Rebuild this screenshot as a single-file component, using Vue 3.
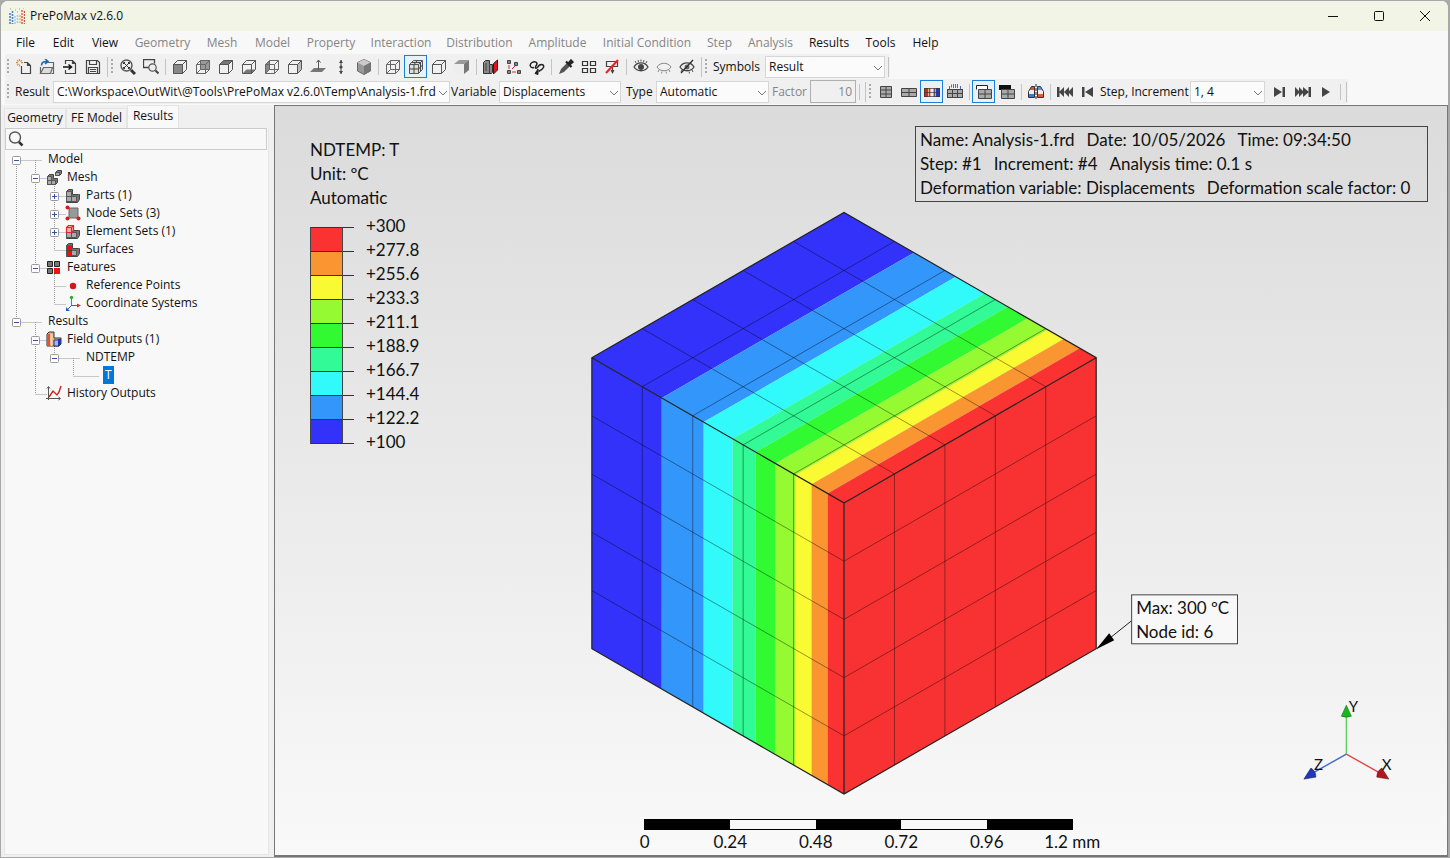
<script setup>
import { ref } from 'vue'

const menus = [
  ['File', true], ['Edit', true], ['View', true], ['Geometry', false], ['Mesh', false],
  ['Model', false], ['Property', false], ['Interaction', false], ['Distribution', false],
  ['Amplitude', false], ['Initial Condition', false], ['Step', false], ['Analysis', false],
  ['Results', true], ['Tools', true], ['Help', true],
]

const wire = '<path d="M1.5 5.5h9v9h-9zM5.5 1.5h9v9h-9zM1.5 5.5l4-4M10.5 5.5l4-4M1.5 14.5l4-4M10.5 14.5l4-4" fill="none" stroke="#666"/>'
const box = '<path d="M1.5 5.5h9v9h-9zM1.5 5.5l4-4h9v9l-4 4M10.5 5.5l4-4" fill="none" stroke="#555"/>'
const grid = '<rect x="0.5" y="5.5" width="15" height="8" fill="#aaa" stroke="#444"/><path d="M5.5 5.5v8M10.5 5.5v8M0.5 9.5h15" stroke="#444" fill="none"/>'
const eye = '<path d="M1 8c3-5.500 11-5.500 14 0c-3 5-11 5-14 0z" fill="none" stroke="#444" stroke-width="1.300"/>'
const lump = '<path d="M1.500 4.500l2-2h4v5h6l1 0v5l-2 3h-11z" fill="#777" stroke="#444"/><path d="M1.500 4.500h5v5h-5zM1.500 9.500h5v5h-5zM6.500 9.500h5v5h-5z" fill="#aaa" stroke="#555"/>'

const icons = {
  new: '<path d="M5.500 7v7.500h9v-8l-3-3h-3.500M11.500 3.500v3h3" fill="none" stroke="#444" stroke-width="1.200"/><path d="M3.500 0v2M3.500 5.500v2M0 3.700h2M5 3.700h2M1 1.200l1.500 1.500M6 1.200l-1.500 1.500M1 6.300l1.500-1.500" stroke="#e0902c" stroke-width="1.200"/>',
  open: '<path d="M7.500 3.500h7v11h-2M1.500 8v6.500" fill="none" stroke="#666" stroke-width="1.200"/><path d="M4.500 8.500h9l-2 6h-10z" fill="#ddd" stroke="#666" stroke-width="1.200"/><path d="M2.500 6.500c0-4 3-4 6-4M6 0l3 2.500l-3 2.500" fill="none" stroke="#1668b4" stroke-width="1.600"/>',
  import: '<path d="M3.500 5v-3.500h7l3 3v10h-10v-3.500M10.500 1.500v3h3" fill="none" stroke="#444" stroke-width="1.200"/><path d="M1 8h8M6.500 5.500l3 2.500l-3 2.500" fill="none" stroke="#111" stroke-width="1.500"/>',
  save: '<path d="M1.500 1.500h11l2 2v11h-13zM4.500 1.500v4h7v-4M3.500 14.500v-6h9v6M5 10.500h6M5 12.500h6" fill="none" stroke="#444" stroke-width="1.200"/>',
  fit: '<circle cx="6.500" cy="6.500" r="5.500" fill="#eee" stroke="#555" stroke-width="1.400"/><path d="M11 11l4 4" stroke="#333" stroke-width="3"/><path d="M4 4l5 5M9 4l-5 5M3.500 5v-1.500h1.500M8 3.500h1.500v1.500M3.500 8v1.500h1.500M9.500 8v1.500h-1.500" stroke="#333" fill="none"/>',
  zoombox: '<path d="M6 8.500h-5.500v-8h11v4" fill="none" stroke="#444" stroke-width="1.300"/><circle cx="9.500" cy="8.500" r="3.700" fill="#eee" stroke="#555" stroke-width="1.200"/><path d="M12.500 11.500l3 3" stroke="#444" stroke-width="2"/>',
  front: '<path d="M1 5h10v10h-10z" fill="#888"/>' + box,
  back: '<path d="M5 1h10v10h-10z" fill="#999"/>' + wire,
  top: '<path d="M1.500 5.500l4-4h9l-4 4z" fill="#777"/>' + box,
  bottom: '<path d="M1.500 14.500l4-4h9l-4 4z" fill="#777"/>' + box,
  left: '<path d="M1.500 5.500l4-4v9l-4 4z" fill="#888"/>' + wire,
  right: '<path d="M10.500 5.500l4-4v9l-4 4z" fill="#bbb"/>' + box,
  normal: '<path d="M0 13l4-4h12l-4 4z" fill="#777"/><path d="M8.500 11v-10M6.500 3.500l2-2.500l2 2.500" stroke="#555" fill="none"/>',
  vertical: '<path d="M8 1v14" stroke="#444"/><path d="M6 4l2-3l2 3zM6 12l2 3l2-3z" fill="#444"/><circle cx="8" cy="8" r="1.600" fill="#444"/>',
  iso: '<path d="M8 0.500l6.500 3v8.500l-6.500 3.500l-6.500-3.500v-8.500z" fill="#999" stroke="#666"/><path d="M1.500 3.500l6.500 3.500l6.500-3.500l-6.500-3z" fill="#ccc"/><path d="M8 7v8.500l6.500-3.500v-8.500z" fill="#777"/>',
  wire,
  edges: '<path d="M1.500 5.500l4-4h9v9l-4 4h-9z" fill="#ddd"/>' + box + '<path d="M3.500 3.500h9v9M9.500 1.500l-3.500 4v9M1.500 10h9l4-4" stroke="#444" fill="none"/>',
  outline: box,
  shaded: '<path d="M0 5h10v10h-10z" fill="#eee"/><path d="M0 5l5-4h10l-5 4z" fill="#999"/><path d="M10 5l5-4v10l-5 4z" fill="#777"/>',
  section: '<path d="M0.500 3.500l2-2h4v4h3v8l-1 1h-8z" fill="#888" stroke="#333"/><path d="M3 4v8M6.500 6v8" stroke="#444"/><path d="M10.500 4.500l4-3.500v10l-4 4z" fill="#e8121c" stroke="#222"/>',
  explode: '<path d="M1.500 1.500h3v3h-3zM8.500 3.500h3v3h-3zM1.500 11.500h3v3h-3zM11.500 11.500h3v3h-3z" fill="#888" stroke="#444"/><path d="M3 6v4M6 10l3-3M6 13h4" stroke="#c03030" fill="none"/>',
  follow: '<path d="M5 8.500c-4 1-5-3-2-5c3-2 6 0 4.500 2.500c-2 3-1 4 1 2.500c2-4 7-4 6 0c-1 2-3 3-5 4" fill="none" stroke="#222" stroke-width="1.500"/><path d="M9 10v5.500l-3-1z" fill="#222" stroke="#222"/>',
  dropper: '<path d="M1 15l2-5l6-6l3 3l-6 6z" fill="#555"/><path d="M8 2.500l5.500 5.500M10 5l3-3.500l1.500 1.500l-3.500 3" stroke="#222" stroke-width="2.200"/>',
  squares: '<path d="M1.500 2.500h5v4h-5zM9.500 2.500h5v4h-5zM1.500 9.500h5v4h-5zM9.500 9.500h5v4h-5z" fill="none" stroke="#333" stroke-width="1.200"/>',
  nolabel: '<path d="M2.500 2.500h11v5h-11zM8.500 7.500v6" fill="none" stroke="#444" stroke-width="1.200"/><path d="M6.500 11h4l-2 4z" fill="#444"/><path d="M2 14l12-13" stroke="#ee2020" stroke-width="2"/>',
  show: eye + '<circle cx="8" cy="8" r="3" fill="#444"/><path d="M3 4l-1-2M5.500 3l-.5-2M8 2.500v-2M10.500 3l.5-2M13 4l1-2" stroke="#555"/>',
  hide: '<path d="M1 8c3-5 11-5 14 0c-3 5-11 5-14 0M3 11l-1 2M6 12.500l-.5 2M10 12.500l.5 2M13 11l1 2" fill="none" stroke="#888"/>',
  toggle: eye + '<circle cx="8" cy="8" r="2.500" fill="#666"/><path d="M2 14l12-13" stroke="#333" stroke-width="1.400"/><path d="M3 11l-1 2M10 12.500l.5 2M13 11l1 2" stroke="#555"/>',
  grid1: '<path d="M2.500 2.500h11v11h-11zM2.500 6h11M2.500 10h11M8 2.500v11" fill="#aaa" stroke="#444"/>',
  grid2: '<path d="M0.500 4.500h15v8h-15zM8 4.500v8M0.500 8.500h15" fill="#aaa" stroke="#444"/>',
  contour: '<path d="M0 4h5v9h-5z" fill="#c62f1e"/><path d="M4 4h3v9h-3z" fill="#f5a88c"/><path d="M7 4h2v9h-2z" fill="#f4ece0"/><path d="M9 4h3v9h-3z" fill="#8fb4ea"/><path d="M12 4h4v9h-4z" fill="#2339c4"/><path d="M0.500 4.500h15v8h-15zM5.500 4.500v8M10.500 4.500v8M0.500 8.500h15" fill="none" stroke="#333" stroke-width="0.700"/>',
  vectors: grid + '<path d="M2.500 2v3M13.500 2v3M4.500 0.500v3" stroke="#456ac8"/><path d="M6.500 0v4M8.500 0v4M10.500 0v4" stroke="#e43b32"/>',
  undeformed: '<path d="M0.500 5.500v-4h11v4" fill="#fff" stroke="#222"/><path d="M2.500 5.500h13v9h-13zM2.500 10h13M9 5.500v9" fill="#aaa" stroke="#444"/>',
  deformed: '<path d="M0 1h12v5h-12z" fill="#111"/><path d="M2.500 5.500h13v9h-13zM2.500 10h13M9 5.500v9" fill="#aaa" stroke="#444"/>',
  symmetry: '<path d="M6.500 2.500v11h-6v-6l3-5z" fill="#f4ece0"/><path d="M3 3h3v3h-4.500z" fill="#e2502f"/><path d="M1 10h5v3h-5z" fill="#3f74e0"/><path d="M9.500 2.500v11h6v-6l-3-5z" fill="#f4ece0"/><path d="M10 3h3l1.500 3h-4.500z" fill="#5a94e4"/><path d="M10 10h5v3h-5z" fill="#e3573c"/><path d="M6.500 2.500v11h-6v-6l3-5zM9.500 2.500v11h6v-6l-3-5z" fill="none" stroke="#333"/><path d="M8 0v16" stroke="#222" stroke-dasharray="3 1"/>',
  first: '<path d="M0 3h2.500v10h-2.500zM7 3v10l-5-5zM12 3v10l-5-5zM16 3v10l-5-5z" fill="#444"/>',
  prev: '<path d="M2 3h2.500v10h-2.500zM13 3v10l-8-5z" fill="#444"/>',
  next: '<path d="M2 3v10l8-5zM10.500 3h2.500v10h-2.500z" fill="#444"/>',
  last: '<path d="M0 3v10l5-5zM4 3v10l5-5zM8 3v10l6-5zM13.500 3h2.500v10h-2.500z" fill="#444"/>',
  play: '<path d="M4 3v10l8-5z" fill="#444"/>',
  mesh: '<path d="M1.500 7.500l2-2h4v4h4l0 4l-2 2h-8z" fill="#777" stroke="#444"/><path d="M1.500 7.500h4v4h-4zM1.500 11.500h4v4h-4zM5.500 11.500h4v4h-4z" fill="#aaa" stroke="#555"/><path d="M9.500 3.500l2-2h4v3l-2 2h-4z" fill="#777" stroke="#444"/><path d="M9.500 3.500h4v3h-4z" fill="#aaa" stroke="#555"/>',
  parts: lump,
  nodes: '<path d="M4 3h9v10h-9z" fill="#999" stroke="#666"/><circle cx="2.500" cy="2.500" r="2" fill="#e8141c"/><circle cx="2.500" cy="13.500" r="2" fill="#e8141c"/><circle cx="13.500" cy="13.500" r="2" fill="#e8141c"/>',
  elements: lump + '<path d="M1.500 4.500l2-2h5v5l-2 2h-5zM1.500 4.500h5v5M6.500 4.500l2-2" fill="#f6b0b0" stroke="#ee2222" stroke-width="1.200"/>',
  surfaces: lump + '<path d="M2 5h5v10h-5z" fill="#f00c10"/><path d="M2 9.500h5" stroke="#444"/>',
  features: '<path d="M1.500 2.500h5v5h-5zM8.500 2.500h5v5h-5zM1.500 9.500h5v5h-5z" fill="#777" stroke="#222"/><path d="M8 9h6v6h-6z" fill="#ee1212"/>',
  point: '<circle cx="8" cy="9" r="3.200" fill="#d01818"/>',
  axes: '<path d="M6.500 3v8" stroke="#3aa040"/><path d="M6.500 10.500h8" stroke="#d03030"/><path d="M6.500 10.500l-5 5" stroke="#3060b0"/><circle cx="6.500" cy="2.500" r="1.700" fill="#25b030"/><path d="M12 8.500l4 2l-4 2z" fill="#d03030"/><path d="M1 12v4h4z" fill="#3060b0"/>',
  field: '<path d="M1 3l2-2h5v6h7v6l-2 2h-12z" fill="#dcb08c" stroke="#333"/><path d="M1 3h3v12h-3z" fill="#e4532f"/><path d="M4.500 3h2v12h-2z" fill="#f3d3a8"/><path d="M8 9h5v6h-5z" fill="#9fb8e8" stroke="#335"/><path d="M12 8h3v5l-2 2h-1z" fill="#2434b8"/>',
  history: '<path d="M2.500 15v-13M1 3.500l1.500-2l1.500 2M0 13.500h14M12.500 12l2 1.500l-2 1.500" fill="none" stroke="#555"/><path d="M3 12l4-6l4 4l2-3l2-6" fill="none" stroke="#cc2222" stroke-width="1.400"/>',
}

const viewTools = [
  'grip', 'new', 'open', 'import', 'save', 'break', 'fit', 'zoombox', 'sep',
  'front', 'back', 'top', 'bottom', 'left', 'right', 'normal', 'vertical', 'iso', 'sep',
  'wire', 'edges', 'outline', 'shaded', 'sep', 'section', 'explode', 'follow', 'sep',
  'dropper', 'squares', 'nolabel', 'sep', 'show', 'hide', 'toggle',
]
const resultTools = ['grid1', 'grid2', 'contour', 'vectors', 'sep', 'undeformed', 'deformed', 'sep', 'symmetry', 'sep', 'first', 'prev']
const playTools = ['next', 'last', 'play']
const active = new Set(['edges', 'contour', 'undeformed'])

const nodes = [
  { label: 'Model', level: 0, state: '-' },
  { label: 'Mesh', level: 1, state: '-', icon: 'mesh' },
  { label: 'Parts (1)', level: 2, state: '+', icon: 'parts' },
  { label: 'Node Sets (3)', level: 2, state: '+', icon: 'nodes' },
  { label: 'Element Sets (1)', level: 2, state: '+', icon: 'elements' },
  { label: 'Surfaces', level: 2, icon: 'surfaces' },
  { label: 'Features', level: 1, state: '-', icon: 'features' },
  { label: 'Reference Points', level: 2, icon: 'point' },
  { label: 'Coordinate Systems', level: 2, icon: 'axes' },
  { label: 'Results', level: 0, state: '-' },
  { label: 'Field Outputs (1)', level: 1, state: '-', icon: 'field' },
  { label: 'NDTEMP', level: 2, state: '-' },
  { label: 'T', level: 3, selected: true },
  { label: 'History Outputs', level: 1, icon: 'history' },
]
const continues = (index, level) => {
  for (const next of nodes.slice(index + 1)) {
    if (next.level < level) return false
    if (next.level === level) return true
  }
  return false
}
const col = (level) => level * 19 + 9.5
const guides = (node, index) => {
  const parts = []
  for (let l = 0; l < node.level; l++) if (continues(index, l)) parts.push(`M${col(l)} 0V18`)
  const x = col(node.level)
  if (index > 0) parts.push(`M${x} 0V10`)
  if (continues(index, node.level)) parts.push(`M${x} 10V18`)
  parts.push(`M${x} 10.500H${node.icon ? x + 11 : x + 26}`)
  if (node.state === '-') parts.push(`M${x + 19} 10V18`)
  return parts.join('')
}

const bands = ['#fa3232', '#fa9632', '#fafa32', '#96fa32', '#32fa32', '#32fa96', '#32fafa', '#3296fa', '#3232fa']
const levels = ['+300', '+277.8', '+255.6', '+233.3', '+211.1', '+188.9', '+166.7', '+144.4', '+122.2', '+100']

// Isometric cube: L is the upper left corner, W/D the run of a horizontal edge, H the height.
const L = { x: 591, y: 357 }
const W = 252.5
const D = 145.5
const H = 291.5
const cuts = [0, 70, 112, 141, 164, 184, 204, 220, 236, W]
const edgeY = (x) => L.y + (x / W) * D
const stripes = cuts.slice(0, -1).map((a, i) => {
  const b = cuts[i + 1]
  return {
    fill: bands[8 - i],
    side: `${L.x + a},${edgeY(a)} ${L.x + b},${edgeY(b)} ${L.x + b},${edgeY(b) + H} ${L.x + a},${edgeY(a) + H}`,
    top: `${L.x + a},${edgeY(a)} ${L.x + b},${edgeY(b)} ${L.x + b + W},${edgeY(b) - D} ${L.x + a + W},${edgeY(a) - D}`,
  }
})
const fx = L.x + W
const fy = L.y + D
const meshLines = [1, 2, 3, 4].map((i) => {
  const u = (W / 5) * i
  const v = (D / 5) * i
  const h = (H / 5) * i
  return [
    `M${L.x + u} ${L.y + v}v${H}`,
    `M${L.x} ${L.y + h}l${W} ${D}`,
    `M${fx + u} ${fy - v}v${H}`,
    `M${fx} ${fy + h}l${W} ${-D}`,
    `M${L.x + u} ${L.y + v}l${W} ${-D}`,
    `M${L.x + u} ${L.y - v}l${W} ${D}`,
  ].join('')
}).join('')

const scaleLabels = ['0', '0.24', '0.48', '0.72', '0.96', '1.2 mm']
const factor = ref('10')
const search = ref('')
</script>

<template>
  <div class="window">
    <header class="titlebar">
      <svg class="logo" viewBox="0 0 16 16" aria-hidden="true">
        <path d="M1 5v11M3.500 3v13" stroke="#4b7fd0" stroke-width="1.600" stroke-dasharray="2 1" />
        <path d="M6 8v8M8.500 7v9" stroke="#a9c6ec" stroke-width="1.600" stroke-dasharray="2 1" />
        <path d="M11 7v9" stroke="#f0b090" stroke-width="1.600" stroke-dasharray="2 1" />
        <path d="M13 2v14M15.500 3v13" stroke="#d9523c" stroke-width="1.400" stroke-dasharray="2 1" />
        <path d="M1 1h1M6 2h1M10 1h1M8 4h1M14 0h1" stroke="#7ba3d8" />
      </svg>
      <h1>PrePoMax v2.6.0</h1>
      <div class="caption">
        <button aria-label="Minimize"><svg viewBox="0 0 12 12"><path d="M1 6.500h10" /></svg></button>
        <button aria-label="Maximize"><svg viewBox="0 0 12 12"><rect x="1.500" y="1.500" width="9" height="9" rx="1" /></svg></button>
        <button aria-label="Close"><svg viewBox="0 0 12 12"><path d="M1 1l10 10M11 1L1 11" /></svg></button>
      </div>
    </header>

    <nav class="menubar">
      <button v-for="[name, enabled] in menus" :key="name" :disabled="!enabled">{{ name }}</button>
    </nav>

    <div class="toolrow">
      <div class="strip">
        <template v-for="(tool, i) in viewTools" :key="i">
          <i v-if="tool === 'grip'" class="grip"></i>
          <i v-else-if="tool === 'sep'" class="sep"></i>
          <template v-else-if="tool === 'break'"><i class="end"></i><i class="grip"></i></template>
          <button v-else class="tool" :class="{ active: active.has(tool) }" :aria-label="tool">
            <svg viewBox="0 0 16 16" v-html="icons[tool]"></svg>
          </button>
        </template>
        <i class="end"></i>
        <i class="grip"></i>
        <label for="symbols" class="symbols">Symbols</label>
        <div class="select w-symbols">
          <select id="symbols"><option>Result</option></select>
          <svg viewBox="0 0 10 6"><path d="M1 1l4 4l4-4" /></svg>
        </div>
        <i class="end"></i>
      </div>
    </div>

    <div class="toolrow">
      <div class="strip">
        <i class="grip"></i>
        <label for="result" class="l-result">Result</label>
        <div class="select w-result">
          <select id="result"><option>C:\Workspace\OutWit\@Tools\PrePoMax v2.6.0\Temp\Analysis-1.frd</option></select>
          <svg viewBox="0 0 10 6"><path d="M1 1l4 4l4-4" /></svg>
        </div>
        <label for="variable" class="l-variable">Variable</label>
        <div class="select w-variable">
          <select id="variable"><option>Displacements</option></select>
          <svg viewBox="0 0 10 6"><path d="M1 1l4 4l4-4" /></svg>
        </div>
        <label for="type" class="l-type">Type</label>
        <div class="select w-type">
          <select id="type"><option>Automatic</option></select>
          <svg viewBox="0 0 10 6"><path d="M1 1l4 4l4-4" /></svg>
        </div>
        <label for="factor" class="l-factor">Factor</label>
        <input id="factor" v-model="factor" class="factor" disabled />
        <i class="sep"></i>
        <i class="end"></i>
        <i class="grip"></i>
        <template v-for="(tool, i) in resultTools" :key="i">
          <i v-if="tool === 'sep'" class="sep"></i>
          <button v-else class="tool" :class="{ active: active.has(tool) }" :aria-label="tool">
            <svg viewBox="0 0 16 16" v-html="icons[tool]"></svg>
          </button>
        </template>
        <label for="increment" class="l-increment">Step, Increment</label>
        <div class="select w-increment">
          <select id="increment"><option>1, 4</option></select>
          <svg viewBox="0 0 10 6"><path d="M1 1l4 4l4-4" /></svg>
        </div>
        <i class="gap"></i>
        <button v-for="tool in playTools" :key="tool" class="tool" :aria-label="tool">
          <svg viewBox="0 0 16 16" v-html="icons[tool]"></svg>
        </button>
        <i class="sep"></i>
        <i class="end"></i>
      </div>
    </div>

    <main class="body">
      <aside class="side">
        <div class="tabs" role="tablist">
          <button role="tab" class="tab t1">Geometry</button>
          <button role="tab" class="tab t2">FE Model</button>
          <button role="tab" class="tab t3 current" aria-selected="true">Results</button>
        </div>
        <div class="panel">
          <div class="search">
            <svg viewBox="0 0 16 16"><circle cx="7" cy="6.500" r="5.500" fill="none" stroke="#555" stroke-width="1.400" /><path d="M11 11l3.500 3.500" stroke="#333" stroke-width="2.500" /></svg>
            <input v-model="search" aria-label="Search tree" />
          </div>
          <ul class="tree">
            <li v-for="(node, i) in nodes" :key="i">
              <svg class="guide" :width="node.level * 19 + 39" height="18">
                <path :d="guides(node, i)" class="dots" />
                <g v-if="node.state" :transform="`translate(${node.level * 19 + 5} 6)`">
                  <rect x="0.500" y="0.500" width="8" height="8" rx="1" class="expander" />
                  <path :d="node.state === '+' ? 'M2 4.500h5M4.500 2v5' : 'M2 4.500h5'" stroke="#3353a5" />
                </g>
                <svg v-if="node.icon" :x="node.level * 19 + 20" y="1" width="16" height="16" viewBox="0 0 16 16" v-html="icons[node.icon]"></svg>
              </svg>
              <span :class="{ selected: node.selected }">{{ node.label }}</span>
            </li>
          </ul>
        </div>
      </aside>

      <section class="viewport">
        <svg class="scene" viewBox="274 105 1173 750">
          <polygon v-for="s in stripes" :key="s.side" :points="s.side" :fill="s.fill" />
          <polygon v-for="s in stripes" :key="s.top" :points="s.top" :fill="s.fill" />
          <polygon :points="`${fx},${fy} ${fx + W},${fy - D} ${fx + W},${fy - D + H} ${fx},${fy + H}`" fill="#f83232" />
          <path :d="meshLines" fill="none" stroke="#000" stroke-opacity="0.450" stroke-width="0.900" />
          <path
            :d="`M${L.x} ${L.y}l${W} ${-D}l${W} ${D}v${H}l${-W} ${D}l${-W} ${-D}zl${W} ${D}v${H}m0 ${-H}l${W} ${-D}`"
            fill="none" stroke="#222" stroke-width="1.200"
          />
          <path d="M1132 620L1097 648" stroke="#222" />
          <path d="M1096 649l18-9l-5-7z" fill="#000" />
          <rect x="1131.500" y="594.500" width="106" height="49" fill="#f8f8f8" stroke="#444" />
          <text x="1136" y="614">Max: 300 ºC</text>
          <text x="1136" y="638">Node id: 6</text>

          <path d="M1346.500 754v-38" stroke="#5fd060" stroke-width="1.400" />
          <path d="M1346.500 754l32 18" stroke="#e04848" stroke-width="1.400" />
          <path d="M1346.500 754l-32 18" stroke="#4068d0" stroke-width="1.400" />
          <path d="M1346.500 705l5 11q-5 2-10 0z" fill="#17b81f" stroke="#176c1a" stroke-width="0.600" />
          <path d="M1389 779l-12-2q0-6 5-9z" fill="#b01820" stroke="#601015" stroke-width="0.600" />
          <path d="M1304 779l12-2q0-6-5-9z" fill="#2038b8" stroke="#101c60" stroke-width="0.600" />
          <g class="axis">
            <text x="1349" y="712">Y</text>
            <text x="1382" y="770">X</text>
            <text x="1314" y="770">Z</text>
          </g>
        </svg>

        <div class="legend">
          <p>NDTEMP: T</p>
          <p>Unit: ºC</p>
          <p>Automatic</p>
          <div class="scale">
            <svg width="48" height="218" viewBox="0 0 48 218">
              <rect v-for="(c, i) in bands" :key="c" x="0.500" :y="i * 24 + 1.500" width="32" height="24" :fill="c" />
              <path v-for="(l, i) in levels" :key="l" :d="`M0 ${i * 24 + 1.500}h44`" stroke="#333" />
              <path d="M0.500 1v217M32.500 1v217" stroke="#444" />
            </svg>
            <ol><li v-for="l in levels" :key="l">{{ l }}</li></ol>
          </div>
        </div>

        <div class="info">
          <p><span>Name: Analysis-1.frd</span><span>Date: 10/05/2026</span><span>Time: 09:34:50</span></p>
          <p><span>Step: #1</span><span>Increment: #4</span><span>Analysis time: 0.1 s</span></p>
          <p><span>Deformation variable: Displacements</span><span>Deformation scale factor: 0</span></p>
        </div>

        <div class="ruler">
          <div class="bar"><i v-for="n in 5" :key="n"></i></div>
          <div class="marks"><span v-for="s in scaleLabels" :key="s">{{ s }}</span></div>
        </div>
      </section>
    </main>
  </div>
</template>

<style>
body { background: linear-gradient(90deg, #aaa 168px, #c83238 168px, #c83238 238px, #aaa 238px, #aaa 1022px, #7886a8 1022px, #7886a8 1099px, #aaa 1099px); }
</style>

<style scoped>
* { box-sizing: border-box; margin: 0; padding: 0; }
.window {
  height: 100vh; display: flex; flex-direction: column; overflow: hidden;
  border: 1px solid #a8a8a8; border-right-width: 2px; border-radius: 8px 8px 0 0;
  background: #f8f8f8; color: #111;
  font: 12px/16px "Open Sans", "Noto Sans", sans-serif;
}
button, select, input { font: inherit; color: inherit; border: 0; background: none; border-radius: 0; }
.titlebar { height: 30px; flex: none; display: flex; align-items: center; background: #f2f4e6; padding-left: 8px; }
.logo { width: 16px; height: 16px; }
h1 { font-size: 12px; font-weight: 400; margin-left: 5px; flex: 1; }
.caption { display: flex; }
.caption button { width: 46px; height: 29px; display: grid; place-items: center; }
.caption svg { width: 12px; height: 12px; fill: none; stroke: #111; }
.menubar {
  height: 23px; flex: none; display: grid; align-items: center; padding-left: 6px;
  grid-template-columns: 37px 39px 44px 71px 48px 53px 64px 76px 81px 75px 104px 41px 61px 56px 47px 43px;
}
.menubar button { white-space: nowrap; }
.menubar button:disabled { color: #858585; }
.toolrow { height: 25px; flex: none; display: flex; padding-left: 4px; }
.strip { display: flex; align-items: center; background: #f0f0f0; border-radius: 3px; height: 25px; }
.grip { width: 7px; height: 17px; flex: none; background: radial-gradient(circle at 3px 2px, #aaa 1px, transparent 1px) 0 0 / 7px 4px; }
.sep { width: 6px; height: 16px; flex: none; border-left: 1px solid #c4c4c4; margin-left: 3px; margin-right: -3px; }
.end { width: 2px; height: 20px; flex: none; border-left: 1px solid #c4c4c4; margin-left: 3px; }
.gap { width: 3px; }
.tool { width: 23px; height: 23px; flex: none; display: grid; place-items: center; border: 1px solid transparent; }
.tool svg { width: 16px; height: 16px; }
.tool.active { border-color: #1a80d8; background: #e9f1f8; }
.strip label { white-space: nowrap; flex: none; }
.symbols { width: 55px; padding-left: 3px; }
.l-result { width: 41px; padding-left: 3px; }
.l-variable { width: 49px; padding-left: 1px; }
.l-type { width: 35px; padding-left: 5px; }
.l-factor { width: 41px; padding-left: 3px; color: #858585; }
.l-increment { width: 91px; padding-left: 1px; }
.select { position: relative; flex: none; height: 22px; }
.select select { appearance: none; width: 100%; height: 22px; padding: 0 9px 0 3px; background: #fbfbfb; border: 1px solid #d6d6d6; }
.select svg { position: absolute; right: 2px; top: 9px; width: 10px; height: 6px; fill: none; stroke: #777; pointer-events: none; }
.w-symbols { width: 120px; }
.w-result { width: 397px; }
.w-variable { width: 122px; }
.w-type { width: 113px; }
.w-increment { width: 75px; }
.factor { width: 46px; height: 23px; border: 1px solid #b0b0b0; text-align: right; padding-right: 3px; color: #858585; background: #f0f0f0; }
.body { flex: 1; min-height: 0; display: flex; padding-top: 1px; }
.side { width: 273px; flex: none; display: flex; flex-direction: column; background: #f0f0f0; padding: 0 5px 2px 3px; }
.tabs { display: flex; align-items: flex-end; height: 23px; flex: none; }
.tab { height: 20px; padding-bottom: 2px; background: #f2f2f2; border: 1px solid #e4e4e4; border-bottom: 0; text-align: center; white-space: nowrap; }
.tab.current { height: 23px; background: #f9f9f9; }
.t1 { width: 62px; }
.t2 { width: 61px; }
.t3 { width: 52px; }
.panel { flex: 1; background: #f8f8f8; border: 1px solid #e6e6e6; border-top: 0; }
.search { height: 22px; display: flex; align-items: center; border: 1px solid #ccc; margin-right: 1px; padding-left: 2px; }
.search svg { width: 16px; height: 16px; }
.search input { flex: 1; min-width: 0; outline: none; }
.tree { list-style: none; padding-left: 2px; }
.tree li { height: 18px; display: flex; align-items: center; white-space: nowrap; }
.guide { flex: none; }
.dots { fill: none; stroke: #999; stroke-dasharray: 1 1; }
.expander { fill: #fff; stroke: #999; }
.tree span { padding: 0 2px; line-height: 18px; }
.tree .selected { background: #0078d7; color: #fff; }
.viewport {
  flex: 1; min-width: 0; position: relative; border: 1px solid #777; border-bottom-width: 2px;
  background: linear-gradient(#dbdbdb, #f9f9f9);
  font: 17px/24px Lato, sans-serif; color: #111;
}
.scene { display: block; width: 100%; height: 100%; }
.scene text { font-size: 17px; fill: #111; }
.scene .axis text { font-size: 15px; }
.legend { position: absolute; left: 35px; top: 32px; }
.scale { display: flex; margin-top: 16px; }
.scale ol { list-style: none; margin: -12px 0 0 8px; }
.info { position: absolute; right: 19px; top: 20px; border: 1px solid #444; padding: 1px 4px; width: 513px; }
.info p { display: flex; gap: 12px; white-space: nowrap; }
.ruler { position: absolute; left: 369px; bottom: 1px; width: 429px; }
.bar { display: flex; height: 11px; border: 1px solid #000; }
.bar i { flex: 1; background: #f8f8f8; }
.bar i:nth-child(odd) { background: #000; }
.marks { display: flex; justify-content: space-between; margin: 0 -42px; }
.marks span { width: 86px; text-align: center; white-space: nowrap; }
</style>
